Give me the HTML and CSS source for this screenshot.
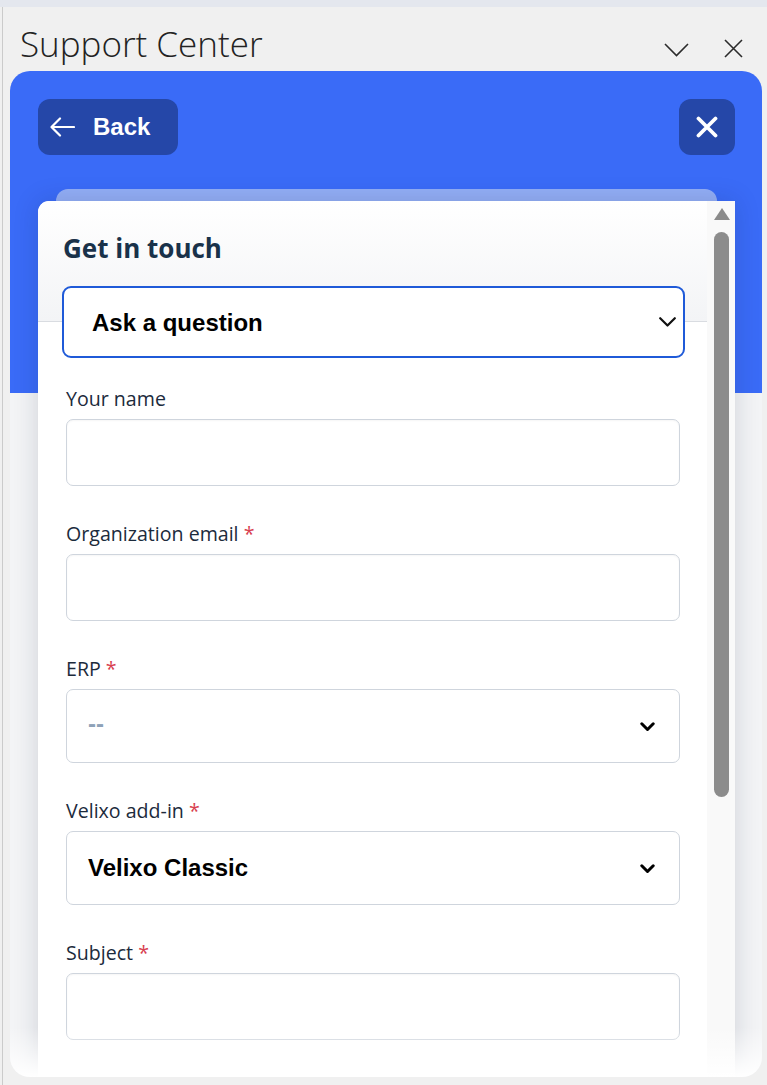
FILE: index.html
```html
<!DOCTYPE html>
<html lang="en">
<head>
<meta charset="utf-8">
<title>Support Center</title>
<link rel="stylesheet" href="styles.css">
</head>
<body>
<div class="topstrip"></div>
<div class="window">
  <div class="titlebar">
    <h1 class="app-title">Support Center</h1>
    <div class="win-actions">
      <svg class="win-chevron" width="25" height="14" viewBox="0 0 25 14"><path d="M1 1 L12.5 12.5 L24 1" fill="none" stroke="#2b2b2b" stroke-width="1.6"/></svg>
      <svg class="win-close" width="19" height="19" viewBox="0 0 19 19"><path d="M1 1 L18 18 M18 1 L1 18" fill="none" stroke="#2b2b2b" stroke-width="1.6"/></svg>
    </div>
  </div>
  <div class="panel">
    <div class="panel-head">
      <button class="btn-back" type="button">
        <svg width="25" height="20" viewBox="0 0 25 20"><path d="M24 10 H2 M10 1.5 L1.5 10 L10 18.5" fill="none" stroke="#fff" stroke-width="2.2" stroke-linecap="round" stroke-linejoin="round"/></svg>
        <span>Back</span>
      </button>
      <button class="btn-close" type="button" aria-label="Close">
        <svg width="22" height="22" viewBox="0 0 22 22"><path d="M2.5 2.5 L19.5 19.5 M19.5 2.5 L2.5 19.5" fill="none" stroke="#fff" stroke-width="3.8" stroke-linecap="round"/></svg>
      </button>
    </div>
    <div class="stack-bar"></div>
    <div class="card">
      <div class="card-body">
        <div class="card-head">
          <h2 class="card-title">Get in touch</h2>
        </div>
        <div class="type-select">
          <span>Ask a question</span>
          <svg width="17" height="10" viewBox="0 0 17 10"><path d="M1.2 1.2 L8.5 8.5 L15.8 1.2" fill="none" stroke="#111" stroke-width="2.2" stroke-linecap="round" stroke-linejoin="round"/></svg>
        </div>
        <div class="field first">
          <label class="label">Your name</label>
          <div class="input"></div>
        </div>
        <div class="field">
          <label class="label">Organization email <span class="req">*</span></label>
          <div class="input"></div>
        </div>
        <div class="field">
          <label class="label">ERP <span class="req">*</span></label>
          <div class="select">
            <span class="placeholder">--</span>
            <svg width="15" height="10" viewBox="0 0 15 10"><path d="M1.8 1.8 L7.5 7.5 L13.2 1.8" fill="none" stroke="#000" stroke-width="3" stroke-linecap="round" stroke-linejoin="round"/></svg>
          </div>
        </div>
        <div class="field">
          <label class="label">Velixo add-in <span class="req">*</span></label>
          <div class="select">
            <span class="value">Velixo Classic</span>
            <svg width="15" height="10" viewBox="0 0 15 10"><path d="M1.8 1.8 L7.5 7.5 L13.2 1.8" fill="none" stroke="#000" stroke-width="3" stroke-linecap="round" stroke-linejoin="round"/></svg>
          </div>
        </div>
        <div class="field">
          <label class="label">Subject <span class="req">*</span></label>
          <div class="input"></div>
        </div>
      </div>
      <div class="scrollbar">
        <div class="scroll-up"></div>
        <div class="scroll-thumb"></div>
      </div>
    </div>
  </div>
</div>
</body>
</html>
```
FILE: styles.css
```css
* { box-sizing: border-box; }
html, body { margin: 0; padding: 0; }
body {
  background: #f0f0f0;
  font-family: "Open Sans", "Noto Sans", sans-serif;
  width: 767px;
  height: 1085px;
  overflow: hidden;
}
.topstrip {
  height: 7px;
  background: #e4e7ee;
}
.window {
  margin-left: 2px;
  border-left: 1px solid #cbcbcb;
  height: 1078px;
}
.titlebar {
  height: 64px;
  display: flex;
  justify-content: space-between;
  align-items: flex-start;
  padding: 13px 24px 0 17px;
}
.app-title {
  margin: 0;
  font-weight: 300;
  font-size: 35px;
  line-height: 47px;
  color: #222;
}
.win-actions {
  display: flex;
  align-items: center;
  gap: 35px;
  padding-top: 19px;
}
.win-chevron { margin-top: 3px; }
.panel {
  position: relative;
  margin-left: 7px;
  width: 752px;
  height: 1006px;
  border-radius: 20px;
  overflow: hidden;
  background: linear-gradient(#3a6bf7 0, #3a6bf7 322px, #f3f4f6 322px);
  display: flex;
  flex-direction: column;
}
.panel::after {
  content: "";
  position: absolute;
  left: 0; right: 0; bottom: 0;
  height: 50px;
  background: linear-gradient(rgba(255,255,255,0), #ffffff);
  pointer-events: none;
}
.panel-head {
  display: flex;
  justify-content: space-between;
  padding: 28px 27px 0 28px;
}
.btn-back, .btn-close {
  border: 0;
  background: #2547a8;
  border-radius: 12px;
  height: 56px;
  color: #fff;
  display: flex;
  align-items: center;
  cursor: pointer;
}
.btn-back {
  width: 140px;
  padding: 0 0 0 12px;
  gap: 18px;
  font-family: "Liberation Sans", Arial, sans-serif;
  font-weight: 700;
  font-size: 24px;
}
.btn-back span { margin-top: -1px; }
.btn-close {
  width: 56px;
  justify-content: center;
  padding: 0;
}
.stack-bar {
  margin: 34px 45px 0 46px;
  height: 12px;
  border-radius: 12px 12px 0 0;
  background: #93aef6;
}
.card {
  flex: 1;
  margin: 0 27px 0 28px;
  background: #fff;
  border-radius: 11px 0 0 0;
  display: flex;
  overflow: hidden;
  box-shadow: 0 0 26px rgba(20, 30, 60, 0.16);
  position: relative;
}
.card-body {
  flex: 1;
  min-width: 0;
}
.card-head {
  height: 121px;
  padding: 30px 0 0 25px;
  border-bottom: 1px solid #d9dce1;
  background: linear-gradient(#ffffff, #f3f4f6);
  border-radius: 11px 0 0 0;
}
.card-title {
  margin: 0;
  font-weight: 700;
  font-size: 26px;
  line-height: 34px;
  color: #19324a;
}
.type-select {
  margin: -36px 22px 0 24px;
  height: 72px;
  border: 2px solid #1f5ad8;
  border-radius: 9px;
  background: #fff;
  display: flex;
  align-items: center;
  justify-content: space-between;
  padding: 0 7px 0 28px;
  font-family: "Liberation Sans", Arial, sans-serif;
  font-weight: 700;
  font-size: 24px;
  color: #000;
}
.type-select span { margin-top: 2px; }
.field {
  margin: 35px 27px 0 28px;
}
.field.first { margin-top: 28px; }
.label {
  display: block;
  font-size: 19.6px;
  line-height: 26px;
  color: #1c2b3c;
  margin-bottom: 7px;
}
.req { color: #d8404f; }
.input {
  height: 67px;
  border: 1px solid #cfd5dd;
  border-radius: 7px;
  background: #fff;
  box-shadow: inset 0 1px 2px rgba(0,0,0,0.04);
}
.select {
  height: 74px;
  border: 1px solid #cfd5dd;
  border-radius: 7px;
  background: #fff;
  display: flex;
  align-items: center;
  justify-content: space-between;
  padding: 0 24px 0 21px;
  font-family: "Liberation Sans", Arial, sans-serif;
  font-weight: 700;
  font-size: 24px;
  color: #000;
}
.select .placeholder { color: #8ea2b8; margin-top: -4px; }
.select svg { margin-top: 2px; }
.scrollbar {
  width: 28px;
  background: #f9f9f9;
  display: flex;
  flex-direction: column;
  align-items: center;
  padding: 7px 0 0 1px;
}
.scroll-up {
  width: 0;
  height: 0;
  border-left: 8px solid transparent;
  border-right: 8px solid transparent;
  border-bottom: 12px solid #8a8a8a;
}
.scroll-thumb {
  margin-top: 12px;
  width: 15px;
  height: 565px;
  border-radius: 8px;
  background: #8c8c8c;
}
```
